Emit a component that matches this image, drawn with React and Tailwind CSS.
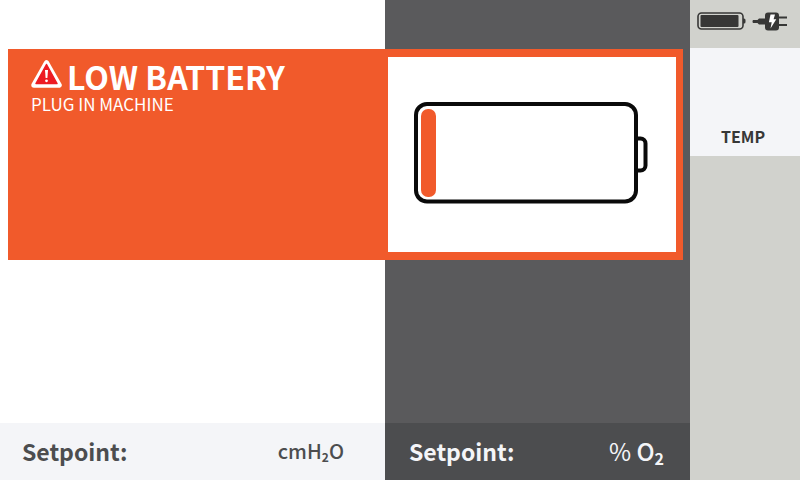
function WarningIcon() {
  return (
    <svg viewBox="0 0 32 28" className="h-7 w-8 shrink-0" aria-hidden="true">
      <path d="M15.500 3 28 25H3Z" fill="#fff" stroke="#fff" strokeWidth="5.500" strokeLinejoin="round" />
      <path d="M15.500 4.500 26 23.500H5Z" fill="#ed1c24" stroke="#ed1c24" strokeWidth="1.500" strokeLinejoin="round" />
      <path d="M14 10h3l-.6 8h-1.800Z" fill="#fff" />
      <circle cx="15.500" cy="20.800" r="1.400" fill="#fff" />
    </svg>
  );
}

function LowBatteryIcon() {
  return (
    <svg viewBox="0 0 234 102" className="h-auto w-[234px]" role="img" aria-label="Battery nearly empty">
      <rect x="2" y="2" width="220" height="97.500" rx="11" fill="none" stroke="#0a0a0a" strokeWidth="4" />
      <rect x="7" y="7" width="15" height="88" rx="7" fill="#f15a2b" />
      <path d="M222 36.500h4.500a5 5 0 0 1 5 5v22a5 5 0 0 1-5 5H222" fill="none" stroke="#0a0a0a" strokeWidth="4" />
    </svg>
  );
}

function StatusBattery() {
  return (
    <svg viewBox="0 0 49 18" className="h-[18px] w-[49px]" role="img" aria-label="Battery">
      <rect x="1" y="1" width="45" height="16" rx="3.500" fill="none" stroke="#373736" strokeWidth="1.600" />
      <rect x="3.500" y="3" width="38" height="12" rx="1" fill="#373736" />
      <path d="M46 6.500h1a1.500 1.500 0 0 1 1.500 1.500v2a1.500 1.500 0 0 1-1.500 1.500h-1Z" fill="#373736" />
    </svg>
  );
}

function StatusPlug() {
  return (
    <svg viewBox="0 0 35 19" className="h-[19px] w-[35px]" role="img" aria-label="Plugged in">
      <path d="M1 8h4.500L7 6.500h6.500v6H7L5.500 11H1Q0 9.500 1 8Z" fill="#373736" />
      <rect x="13" y=".5" width="14" height="18" rx="3" fill="#373736" />
      <path d="M26 4.500h9v2h-9ZM26 12h9v2h-9Z" fill="#373736" />
      <path d="M18.500 2.500h4.500l-1.400 4.700h2.700L18.500 16.500l1.200-6.300h-2.800Z" fill="#fff" />
    </svg>
  );
}

function Readout({ tone, children }) {
  return (
    <section className={"flex flex-col justify-end " + (tone === "dark" ? "bg-[#5a5a5c]" : "bg-white")}>
      <div
        className={
          "flex h-[57px] items-center justify-between pb-[2px] " +
          (tone === "dark" ? "bg-[#4c4d4f] pr-[26px] pl-6 text-[#f4f5f8]" : "bg-[#f4f5f8] pr-[41px] pl-[22px] text-[#4c4d4f]")
        }
      >
        <h2 className="text-[23px] leading-8 font-bold">Setpoint:</h2>
        {children}
      </div>
    </section>
  );
}

export default function App() {
  return (
    <div className="grid min-h-screen grid-cols-[690fr_110fr] bg-[#d1d2cd] font-['Noto_Sans_CJK_SC','Open_Sans',sans-serif]">
      <main className="grid">
        <div className="col-start-1 row-start-1 grid grid-cols-[385fr_305fr]">
          <Readout tone="light">
            <p className="text-xl leading-8 font-medium">
              cmH<sub className="text-xs font-bold">2</sub>O
            </p>
          </Readout>
          <Readout tone="dark">
            <p className="text-2xl leading-8 font-medium">
              <span className="font-normal">%</span> O<sub className="text-base font-bold">2</sub>
            </p>
          </Readout>
        </div>
        <div
          role="alert"
          className="col-start-1 row-start-1 mt-[49px] mr-[7px] ml-2 grid grid-cols-[380fr_295fr] self-start bg-[#f15a2b] text-white"
        >
          <div className="pt-[11px] pl-[23px]">
            <h1 className="flex items-start gap-1 text-[32px] leading-8 font-bold">
              <WarningIcon />
              LOW BATTERY
            </h1>
            <p className="text-[17px] leading-6">PLUG IN MACHINE</p>
          </div>
          <div className="my-2 mr-[7px] flex h-[195px] items-center bg-white pb-1 pl-[26px]">
            <LowBatteryIcon />
          </div>
        </div>
      </main>
      <aside className="flex flex-col">
        <div className="flex h-12 items-center gap-[6px] pb-[6px] pl-[7px]">
          <StatusBattery />
          <StatusPlug />
        </div>
        <div className="flex h-[108px] items-end justify-center bg-[#f4f5f8] pr-1 pb-2">
          <h2 className="text-base leading-6 font-bold text-[#373736]">TEMP</h2>
        </div>
      </aside>
    </div>
  );
}
